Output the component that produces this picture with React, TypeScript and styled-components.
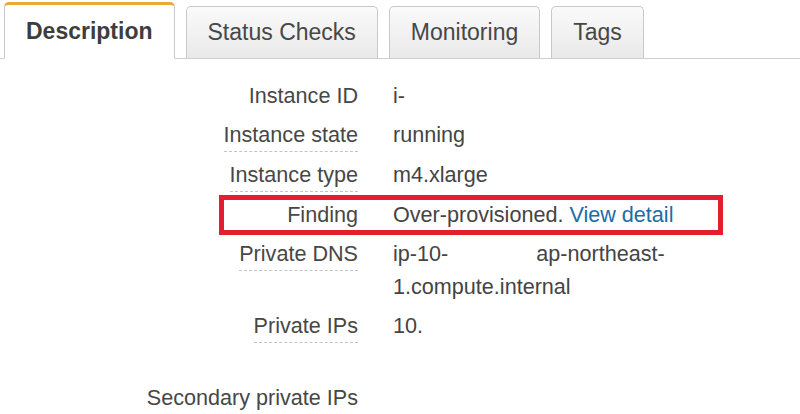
import React from 'react';
import styled, { createGlobalStyle } from 'styled-components';

const GlobalStyle = createGlobalStyle`
  body {
    margin: 0;
    background: #fff;
    font-family: "Liberation Sans", Arial, sans-serif;
    color: #444;
  }
`;

const tabs = ['Description', 'Status Checks', 'Monitoring', 'Tags'];

interface TabProps {
  active?: boolean;
}

interface RowProps {
  highlight?: boolean;
}

const App = () => {
  return (
    <>
      <GlobalStyle />
      <Page>
        <TabBar>
          {tabs.map((t, i) => (
            <Tab key={t} active={i === 0}>{t}</Tab>
          ))}
        </TabBar>
        <Details>
          <Row>
            <Label><span>Instance ID</span></Label>
            <Value>i-</Value>
          </Row>
          <Row>
            <Label><Dashed>Instance state</Dashed></Label>
            <Value>running</Value>
          </Row>
          <Row>
            <Label><Dashed>Instance type</Dashed></Label>
            <Value>m4.xlarge</Value>
          </Row>
          <Row highlight>
            <Label><span>Finding</span></Label>
            <Value>Over-provisioned. <Link href="#">View detail</Link></Value>
          </Row>
          <Row>
            <Label><Dashed>Private DNS</Dashed></Label>
            <Value>
              ip-10-<Redacted />ap-northeast-<br />1.compute.internal
            </Value>
          </Row>
          <Row>
            <Label><Dashed>Private IPs</Dashed></Label>
            <Value>10.<br />&nbsp;</Value>
          </Row>
          <Row>
            <Label><Dashed>Secondary private IPs</Dashed></Label>
            <Value></Value>
          </Row>
        </Details>
      </Page>
    </>
  );
};

export default App;

const Page = styled.div`
  width: 800px;
  height: 414px;
  overflow: hidden;
`;

const TabBar = styled.div`
  display: flex;
  align-items: flex-end;
  gap: 11px;
  height: 58px;
  padding-left: 4px;
  border-bottom: 1px solid #cfcfcf;
`;

const Tab = styled.div<TabProps>`
  box-sizing: border-box;
  padding: ${p => (p.active ? '13px 21px 14px' : '12px 21px 13px')};
  font-size: 23px;
  line-height: 26px;
  font-weight: ${p => (p.active ? 700 : 400)};
  color: ${p => (p.active ? '#3d3d3d' : '#474747')};
  background: ${p => (p.active ? '#fff' : 'linear-gradient(#fafafa, #e9e9e9)')};
  border: 1px solid #c9c9c9;
  border-top: ${p => (p.active ? '3px solid #e8a93a' : '1px solid #c9c9c9')};
  border-bottom: ${p => (p.active ? '1px solid #fff' : 'none')};
  border-radius: 5px 5px 0 0;
  margin-bottom: ${p => (p.active ? '-1px' : '0')};
  white-space: nowrap;
`;

const Details = styled.div`
  padding-top: 20px;
`;

const Row = styled.div<RowProps>`
  position: relative;
  display: flex;
  gap: 35px;
  padding-left: 138px;
  padding-bottom: 6px;
  font-size: 21.6px;
  line-height: 33px;

  ${p => p.highlight && `
    &::after {
      content: '';
      position: absolute;
      left: 219px;
      top: -3px;
      width: 504px;
      height: 40px;
      box-sizing: border-box;
      border: 5px solid #e21f2c;
      pointer-events: none;
    }
  `}
`;

const Label = styled.div`
  width: 220px;
  flex-shrink: 0;
  text-align: right;
  color: #474747;
  white-space: nowrap;
`;

const Dashed = styled.span`
  display: inline-block;
  border-bottom: 1px dashed #c4c4c4;
  line-height: 32px;
`;

const Value = styled.div`
  color: #444;
  white-space: nowrap;
`;

const Redacted = styled.span`
  display: inline-block;
  width: 88px;
`;

const Link = styled.a`
  color: #216ca5;
  text-decoration: none;
`;
